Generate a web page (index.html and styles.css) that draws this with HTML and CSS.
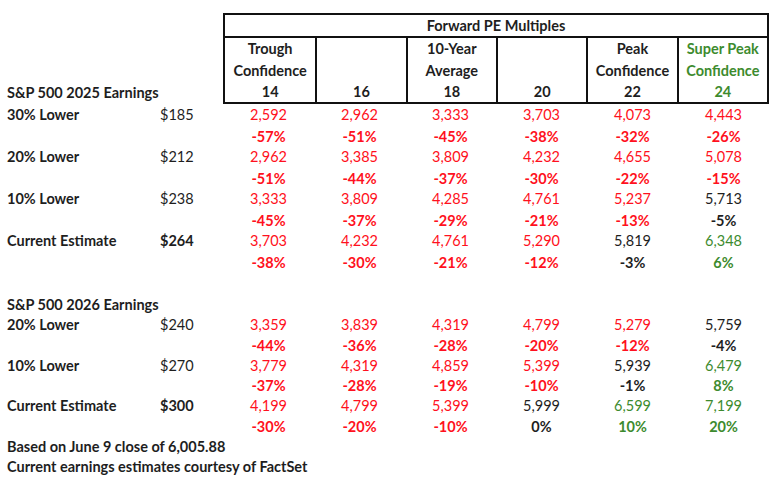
FILE: index.html
```html
<!DOCTYPE html>
<html>
<head>
<meta charset="utf-8">
<link rel="stylesheet" href="styles.css">
</head>
<body>
<div class="page">
  <div class="head">
    <div class="head-label">S&amp;P 500 2025 Earnings</div>
    <div class="box">
      <div class="box-title">Forward PE Multiples</div>
      <div class="box-cols">
        <div class="hc"><span>Trough</span><span>Confidence</span><span>14</span></div>
        <div class="hc"><span>16</span></div>
        <div class="hc"><span>10-Year</span><span>Average</span><span>18</span></div>
        <div class="hc"><span>20</span></div>
        <div class="hc"><span>Peak</span><span>Confidence</span><span>22</span></div>
        <div class="hc g"><span>Super Peak</span><span>Confidence</span><span>24</span></div>
      </div>
    </div>
  </div>

  <div class="grid s1">
    <div class="lab">30% Lower</div><div class="eps">$185</div>
    <div class="v r">2,592</div><div class="v r">2,962</div><div class="v r">3,333</div><div class="v r">3,703</div><div class="v r">4,073</div><div class="v r">4,443</div>
    <div class="lab"></div><div class="eps"></div>
    <div class="p r">-57%</div><div class="p r">-51%</div><div class="p r">-45%</div><div class="p r">-38%</div><div class="p r">-32%</div><div class="p r">-26%</div>

    <div class="lab">20% Lower</div><div class="eps">$212</div>
    <div class="v r">2,962</div><div class="v r">3,385</div><div class="v r">3,809</div><div class="v r">4,232</div><div class="v r">4,655</div><div class="v r">5,078</div>
    <div class="lab"></div><div class="eps"></div>
    <div class="p r">-51%</div><div class="p r">-44%</div><div class="p r">-37%</div><div class="p r">-30%</div><div class="p r">-22%</div><div class="p r">-15%</div>

    <div class="lab">10% Lower</div><div class="eps">$238</div>
    <div class="v r">3,333</div><div class="v r">3,809</div><div class="v r">4,285</div><div class="v r">4,761</div><div class="v r">5,237</div><div class="v k">5,713</div>
    <div class="lab"></div><div class="eps"></div>
    <div class="p r">-45%</div><div class="p r">-37%</div><div class="p r">-29%</div><div class="p r">-21%</div><div class="p r">-13%</div><div class="p k">-5%</div>

    <div class="lab">Current Estimate</div><div class="eps b">$264</div>
    <div class="v r">3,703</div><div class="v r">4,232</div><div class="v r">4,761</div><div class="v r">5,290</div><div class="v k">5,819</div><div class="v g">6,348</div>
    <div class="lab"></div><div class="eps"></div>
    <div class="p r">-38%</div><div class="p r">-30%</div><div class="p r">-21%</div><div class="p r">-12%</div><div class="p k">-3%</div><div class="p g">6%</div>
  </div>

  <div class="grid s2">
    <div class="lab wide">S&amp;P 500 2026 Earnings</div>

    <div class="lab">20% Lower</div><div class="eps">$240</div>
    <div class="v r">3,359</div><div class="v r">3,839</div><div class="v r">4,319</div><div class="v r">4,799</div><div class="v r">5,279</div><div class="v k">5,759</div>
    <div class="lab"></div><div class="eps"></div>
    <div class="p r">-44%</div><div class="p r">-36%</div><div class="p r">-28%</div><div class="p r">-20%</div><div class="p r">-12%</div><div class="p k">-4%</div>

    <div class="lab">10% Lower</div><div class="eps">$270</div>
    <div class="v r">3,779</div><div class="v r">4,319</div><div class="v r">4,859</div><div class="v r">5,399</div><div class="v k">5,939</div><div class="v g">6,479</div>
    <div class="lab"></div><div class="eps"></div>
    <div class="p r">-37%</div><div class="p r">-28%</div><div class="p r">-19%</div><div class="p r">-10%</div><div class="p k">-1%</div><div class="p g">8%</div>

    <div class="lab">Current Estimate</div><div class="eps b">$300</div>
    <div class="v r">4,199</div><div class="v r">4,799</div><div class="v r">5,399</div><div class="v k">5,999</div><div class="v g">6,599</div><div class="v g">7,199</div>
    <div class="lab"></div><div class="eps"></div>
    <div class="p r">-30%</div><div class="p r">-20%</div><div class="p r">-10%</div><div class="p k">0%</div><div class="p g">10%</div><div class="p g">20%</div>

    <div class="lab wide">Based on June 9 close of 6,005.88</div>
    <div class="lab wide">Current earnings estimates courtesy of FactSet</div>
  </div>
</div>
</body>
</html>
```

FILE: styles.css
```css
* { box-sizing: border-box; }
html, body { margin: 0; padding: 0; background: #ffffff; }
body {
  font-family: Lato, "Open Sans", "Liberation Sans", sans-serif;
  font-size: 14.5px;
  color: #1e1e1e;
}
.page {
  width: 780px;
  height: 484px;
  padding: 13px 0 0 7px;
  overflow: hidden;
}
.head {
  display: flex;
  align-items: flex-end;
}
.head-label {
  width: 216px;
  font-weight: 700;
  line-height: 21px;
  padding-bottom: 1px;
}
.box {
  width: 546px;
  border: 2px solid #111;
  font-weight: 700;
}
.box-title {
  height: 23px;
  line-height: 21px;
  text-align: center;
  border-bottom: 2px solid #111;
}
.box-cols {
  display: grid;
  grid-template-columns: repeat(6, 1fr);
  height: 64px;
}
.hc {
  display: flex;
  flex-direction: column;
  justify-content: flex-end;
  align-items: center;
  line-height: 21.5px;
}
.hc + .hc { border-left: 2px solid #111; }
.grid {
  display: grid;
  grid-template-columns: 153px 63px repeat(6, 91px);
}
.s1 { grid-auto-rows: 21px; margin-top: 1px; }
.s1 .p { padding-top: 1px; }
.s2 { grid-auto-rows: 20.25px; margin-top: 22px; }
.lab { font-weight: 700; line-height: 20px; white-space: nowrap; }
.wide { grid-column: 1 / -1; }
.eps { line-height: 20px; }
.b { font-weight: 700; }
.v, .p { text-align: center; line-height: 20px; }
.p { font-weight: 700; }
.r { color: #ff1020; }
.g { color: #3d8b2e; }
.k { color: #1e1e1e; }
.hc.g { color: #3d8b2e; }
```
